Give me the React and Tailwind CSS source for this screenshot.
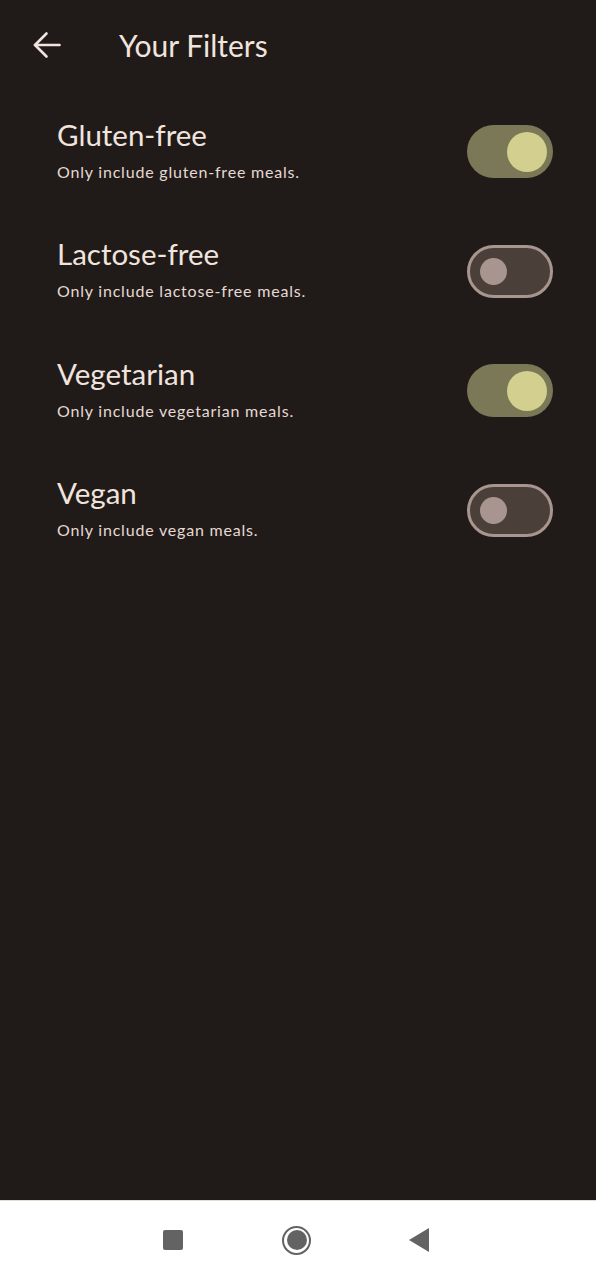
import React, { useState } from 'react';

const filters = [
  { key: 'gluten', title: 'Gluten-free', desc: 'Only include gluten-free meals.', on: true },
  { key: 'lactose', title: 'Lactose-free', desc: 'Only include lactose-free meals.', on: false },
  { key: 'vegetarian', title: 'Vegetarian', desc: 'Only include vegetarian meals.', on: true },
  { key: 'vegan', title: 'Vegan', desc: 'Only include vegan meals.', on: false },
];

function Toggle({ on, onClick }) {
  return on ? (
    <button onClick={onClick} className="w-[86px] h-[53px] rounded-full bg-[#7a7857] flex items-center justify-end pr-[6px]">
      <span className="w-[40px] h-[40px] rounded-full bg-[#d3cf8e]" />
    </button>
  ) : (
    <button onClick={onClick} className="w-[86px] h-[53px] rounded-full bg-[#4b3f3a] border-[3px] border-[#a8958f] flex items-center pl-[10px]">
      <span className="w-[27px] h-[27px] rounded-full bg-[#a8958f]" />
    </button>
  );
}

export default function App() {
  const [state, setState] = useState(Object.fromEntries(filters.map((f) => [f.key, f.on])));

  return (
    <div className="h-[1280px] flex flex-col bg-[#201b18] font-['Lato',sans-serif]">
      {/* header */}
      <div className="h-[92px] flex items-center pl-[33px] pb-[2px]">
        <svg width="28" height="28" viewBox="0 0 28 28" fill="none" stroke="#f1e4de" strokeWidth="2.6" strokeLinecap="round" strokeLinejoin="round">
          <path d="M26.5 14H2" />
          <path d="M13.5 2.5L2 14l11.5 11.5" />
        </svg>
        <h1 className="ml-[58px] text-[30px] text-[#f1e4de] leading-none">Your Filters</h1>
      </div>

      <div className="flex-1 flex flex-col">
        {filters.map((f) => (
          <div key={f.key} className="h-[119.5px] flex items-center justify-between pl-[57px] pr-[43px]">
            <div className="flex flex-col pb-[4px]">
              <span className="text-[29.5px] leading-[34px] text-[#f1e4de]">{f.title}</span>
              <span className="mt-[10px] text-[16px] leading-[20px] tracking-[0.8px] text-[#e6d9d3]">{f.desc}</span>
            </div>
            <Toggle on={state[f.key]} onClick={() => setState((s) => ({ ...s, [f.key]: !s[f.key] }))} />
          </div>
        ))}
      </div>

      {/* system nav */}
      <div className="h-[80px] bg-white border-t border-[#e2ded6] flex items-center justify-center pb-[1px] pr-[4px]">
        <span className="w-[20px] h-[20px] rounded-[2px] bg-[#636363]" />
        <span className="ml-[99px] w-[29px] h-[29px] rounded-full border-[2.5px] border-[#636363] flex items-center justify-center">
          <span className="w-[20px] h-[20px] rounded-full bg-[#636363]" />
        </span>
        <svg className="ml-[98px]" width="20" height="24" viewBox="0 0 20 24">
          <path d="M20 0 L0 12 L20 24 Z" fill="#636363" />
        </svg>
      </div>
    </div>
  );
}
